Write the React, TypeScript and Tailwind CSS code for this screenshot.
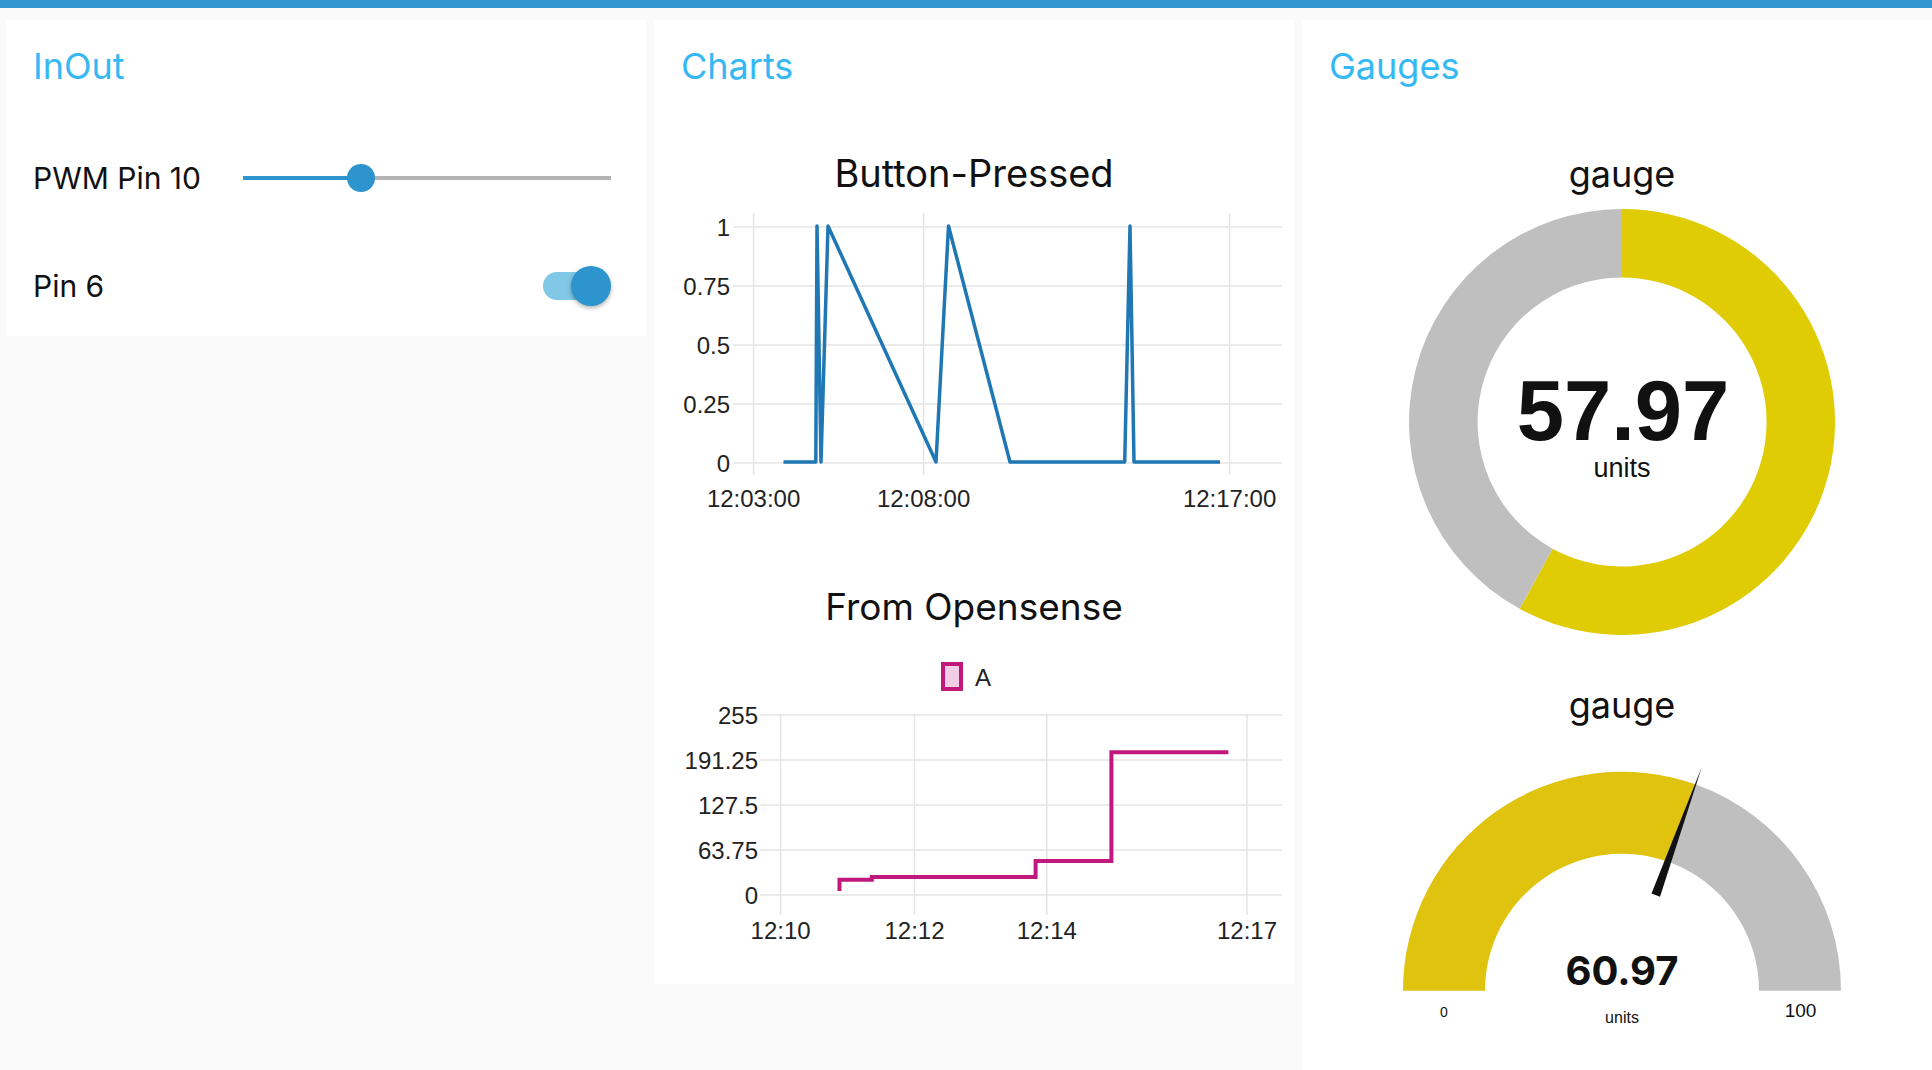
import React from "react";

const axisFont = "'Liberation Sans', Arial, sans-serif";

function Card({ title, className, children }: { title: string; className: string; children?: React.ReactNode }) {
  return (
    <div className={`w-[640px] shrink-0 bg-white ${className}`}>
      <div className="flex h-[92px] items-center px-[27px] text-[36px] leading-none text-[#35b8f4]">{title}</div>
      {children}
    </div>
  );
}

function Slider({ value }: { value: number }) {
  return (
    <div className="relative h-[28px] flex-1">
      <div className="absolute left-0 right-0 top-[12px] h-[4px] bg-[#b4b4b4]" />
      <div className="absolute left-0 top-[12px] h-[4px] bg-[#2e94cd]" style={{ width: `${value}%` }} />
      <div
        className="absolute top-0 h-[28px] w-[28px] -translate-x-1/2 rounded-full bg-[#2e94cd]"
        style={{ left: `${value}%` }}
      />
    </div>
  );
}

function Toggle() {
  return (
    <div className="relative h-[40px] w-[68px]">
      <div className="absolute left-0 top-[6px] h-[28px] w-[54px] rounded-full bg-[#80c8e6]" />
      <div className="absolute right-0 top-0 h-[40px] w-[40px] rounded-full bg-[#2e94cd] shadow-[0_2px_4px_rgba(0,0,0,0.3)]" />
    </div>
  );
}

function ButtonChart() {
  const ys = [34, 93, 152, 211, 270];
  const labels = ["1", "0.75", "0.5", "0.25", "0"];
  const xs = [99.6, 269.6, 575.6];
  const xl = ["12:03:00", "12:08:00", "12:17:00"];
  const pts =
    "129.5,269 161.8,269 163,33 167,269 174,33 282,269 294.5,33 356,269 470.7,269 476,33 480,269 566,269";
  return (
    <svg width="640" height="330" viewBox="0 0 640 330" className="block">
      {ys.map((y) => (
        <line key={y} x1="79" x2="628" y1={y} y2={y} stroke="#e4e4e4" strokeWidth="1.5" />
      ))}
      {xs.map((x) => (
        <line key={x} x1={x} x2={x} y1="20" y2="282" stroke="#e4e4e4" strokeWidth="1.5" />
      ))}
      {ys.map((y, i) => (
        <text key={i} x="76" y={y + 8.5} textAnchor="end" fontSize="24" fontFamily={axisFont} fill="#222">
          {labels[i]}
        </text>
      ))}
      {xs.map((x, i) => (
        <text key={i} x={x} y="314" textAnchor="middle" fontSize="24" fontFamily={axisFont} fill="#222">
          {xl[i]}
        </text>
      ))}
      <polyline points={pts} fill="none" stroke="#1f77b4" strokeWidth="3.5" strokeLinejoin="round" />
    </svg>
  );
}

function SenseChart() {
  const ys = [88, 133, 178, 223, 268];
  const labels = ["255", "191.25", "127.5", "63.75", "0"];
  const xs = [126.6, 260.5, 392.8, 593];
  const xl = ["12:10", "12:12", "12:14", "12:17"];
  const pts =
    "185.5,264 185.5,252.8 217.8,252.8 217.8,250 381.6,250 381.6,234 457.4,234 457.4,125.3 574.4,125.3";
  return (
    <svg width="640" height="333" viewBox="0 0 640 333" className="block">
      <rect x="289" y="37" width="18" height="25" fill="#f2cde4" stroke="#c0187c" strokeWidth="4" />
      <text x="321" y="59" fontSize="24" fontFamily={axisFont} fill="#222">
        A
      </text>
      {ys.map((y) => (
        <line key={y} x1="106" x2="628" y1={y} y2={y} stroke="#e4e4e4" strokeWidth="1.5" />
      ))}
      {xs.map((x) => (
        <line key={x} x1={x} x2={x} y1="87" y2="288" stroke="#e4e4e4" strokeWidth="1.5" />
      ))}
      {ys.map((y, i) => (
        <text key={i} x="104" y={y + 8.5} textAnchor="end" fontSize="24" fontFamily={axisFont} fill="#222">
          {labels[i]}
        </text>
      ))}
      {xs.map((x, i) => (
        <text key={i} x={x} y="312" textAnchor="middle" fontSize="24" fontFamily={axisFont} fill="#222">
          {xl[i]}
        </text>
      ))}
      <polyline points={pts} fill="none" stroke="#c0187c" strokeWidth="4" />
    </svg>
  );
}

function DonutGauge() {
  return (
    <svg width="640" height="460" viewBox="0 0 640 460" className="block">
      <path d="M 320 13 A 213 213 0 1 1 217.7 412.8 L 250.6 352.7 A 144.5 144.5 0 1 0 320 81.5 Z" fill="#e0cc05" />
      <path d="M 217.7 412.8 A 213 213 0 0 1 320 13 L 320 81.5 A 144.5 144.5 0 0 0 250.6 352.7 Z" fill="#bfbfbf" />
      <text x="321" y="244" textAnchor="middle" fontSize="85" fontWeight="700" fontFamily={axisFont} fill="#111">
        57.97
      </text>
      <text x="320" y="281" textAnchor="middle" fontSize="27" fontFamily={axisFont} fill="#111">
        units
      </text>
    </svg>
  );
}

function HalfGauge() {
  return (
    <svg width="640" height="343" viewBox="0 0 640 343" className="block">
      <path d="M 101 263.7 A 219 219 0 0 1 394 57.6 L 366.3 134.8 A 137 137 0 0 0 183 263.7 Z" fill="#dfc30e" />
      <path d="M 394 57.6 A 219 219 0 0 1 539 263.7 L 457 263.7 A 137 137 0 0 0 366.3 134.8 Z" fill="#bfbfbf" />
      <polygon points="349.5,166.5 358,169.8 400,39.5" fill="#111" />
      <text x="320" y="258" textAnchor="middle" fontSize="40" fontWeight="700" fontFamily="Inter, sans-serif" fill="#111">
        60.97
      </text>
      <text x="142" y="290" textAnchor="middle" fontSize="14" fontFamily={axisFont} fill="#111">
        0
      </text>
      <text x="320" y="296" textAnchor="middle" fontSize="16" fontFamily={axisFont} fill="#111">
        units
      </text>
      <text x="498.5" y="290" textAnchor="middle" fontSize="19" fontFamily={axisFont} fill="#111">
        100
      </text>
    </svg>
  );
}

export default function App() {
  return (
    <div className="h-[1070px] w-[1932px] overflow-hidden bg-[#fafafa] font-['Inter',sans-serif] text-[#111]">
      <div className="h-[8px] bg-[#2f96cf]" />
      <div className="flex items-start gap-[8px] pl-[6px] pt-[12px]">
        <Card title="InOut" className="h-[316px]">
          <div className="mt-[22px] flex h-[88px] items-center pl-[27px] pr-[35px]">
            <div className="w-[210px] text-[30px]">PWM Pin 10</div>
            <Slider value={32} />
          </div>
          <div className="mt-[20px] flex h-[88px] items-center justify-between pl-[27px] pr-[35px]">
            <div className="text-[30px]">Pin 6</div>
            <Toggle />
          </div>
        </Card>
        <Card title="Charts" className="h-[964px]">
          <div className="mt-[41px] flex h-[40px] items-center justify-center text-[38px]">Button-Pressed</div>
          <ButtonChart />
          <div className="mt-[64px] flex h-[40px] items-center justify-center text-[37px]">From Opensense</div>
          <SenseChart />
        </Card>
        <Card title="Gauges" className="h-[1050px]">
          <div className="mt-[40px] h-[44px] text-center text-[36px] leading-[44px]">gauge</div>
          <DonutGauge />
          <div className="mt-[27px] h-[44px] text-center text-[36px] leading-[44px]">gauge</div>
          <HalfGauge />
        </Card>
      </div>
    </div>
  );
}
